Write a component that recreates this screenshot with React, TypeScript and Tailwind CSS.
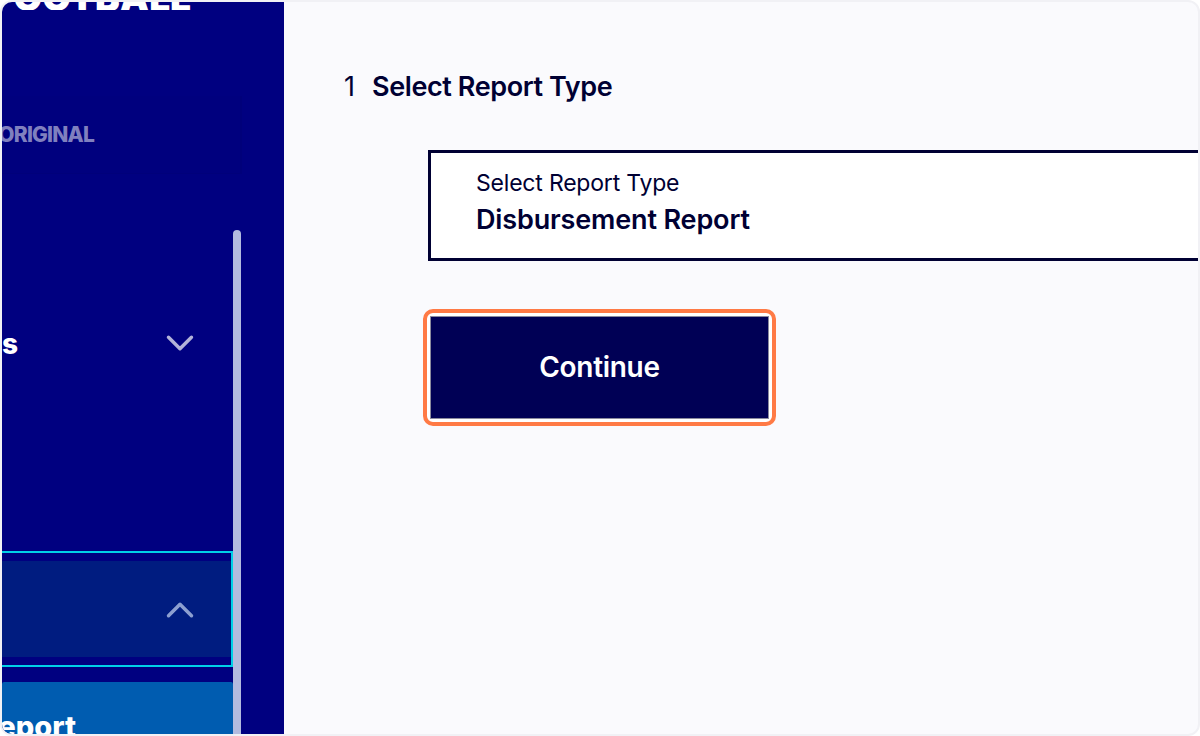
import { ChevronDown, ChevronUp } from 'lucide-react';

const FONT = "font-['Inter','Noto_Sans',sans-serif]";

function Sidebar() {
  return (
    <aside className="relative flex h-full w-[282px] shrink-0 flex-col overflow-hidden bg-[#000080]">
      {/* logo, cut off by the top of the shot */}
      <div className="flex h-[8px] shrink-0 items-end justify-end overflow-hidden pr-[93px]">
        <span className="whitespace-nowrap text-[37px] leading-[25px] font-black text-white">FOOTBALL</span>
      </div>

      {/* faded game switcher */}
      <div className="mt-[86px] flex h-[78px] w-[240px] shrink-0 items-center justify-end border-r-2 border-b border-[#00007a] bg-[#00007e] pr-[146px]">
        <span className="whitespace-nowrap text-[21px] font-extrabold tracking-[-0.8px] text-[#8080bf]">ORIGINAL</span>
      </div>

      <div className="mt-[140px] flex h-[60px] w-[231px] shrink-0 items-center justify-end">
        <span className="mr-[139px] text-[28px] font-extrabold text-white">s</span>
        <ChevronDown size={46} strokeWidth={1.8} className="mr-[30px] -translate-y-[1px] text-[#b3b3d9]" />
      </div>

      {/* focused accordion row */}
      <div className="mt-[177px] h-[116px] w-[231px] shrink-0 border-y-2 border-r-2 border-[#00d0e8] py-[8px]">
        <div className="flex h-full items-center justify-end bg-[#001c80] pr-[28px]">
          <ChevronUp size={46} strokeWidth={1.8} className="translate-y-[1px] text-[#8c9fd0]" />
        </div>
      </div>

      <div className="mt-[15px] flex h-[60px] w-[231px] shrink-0 items-start justify-end rounded-t-[2px] bg-[#005cb0] pt-[29px] pr-[157px]">
        <span className="whitespace-nowrap text-[29px] leading-[32px] font-extrabold text-white">Report</span>
      </div>

      <div className="absolute top-[228px] bottom-0 left-[231px] w-[8px] rounded-t-full bg-[#b3bbdf]" />
    </aside>
  );
}

export default function App() {
  return (
    <div className={`${FONT} h-[736px] w-[1200px] overflow-hidden bg-white`}>
      <div className="flex h-full overflow-hidden rounded-[12px] border-2 border-[#f1f1f5] bg-[#fafafd]">
        <Sidebar />
        <main className="min-w-0 flex-1 pt-[69px] text-[#000033]">
          <h2 className="flex h-[32px] items-center pl-[60px] text-[27px] font-semibold tracking-[-0.4px] whitespace-nowrap">
            <span className="w-[28px] font-normal">1</span>
            Select Report Type
          </h2>

          <div className="mt-[47px] ml-[144px] h-[111px] w-[780px] border-[3px] border-[#000033] bg-white pt-[16px] pl-[45px]">
            <p className="text-[23px] leading-[28px] tracking-[-0.2px]">Select Report Type</p>
            <p className="mt-[8px] text-[27px] leading-[30px] font-semibold tracking-[-0.15px]">Disbursement Report</p>
          </div>

          <div className="mt-[48px] ml-[139px] w-[353px] rounded-[10px] border-4 border-[#ff7a45] bg-white p-[3px]">
            <button className="flex h-[103px] w-full items-center justify-center border border-[#8a8a9e] bg-[#000055] pb-[2px] text-[28px] font-semibold tracking-[-0.3px] text-white">
              Continue
            </button>
          </div>
        </main>
      </div>
    </div>
  );
}
